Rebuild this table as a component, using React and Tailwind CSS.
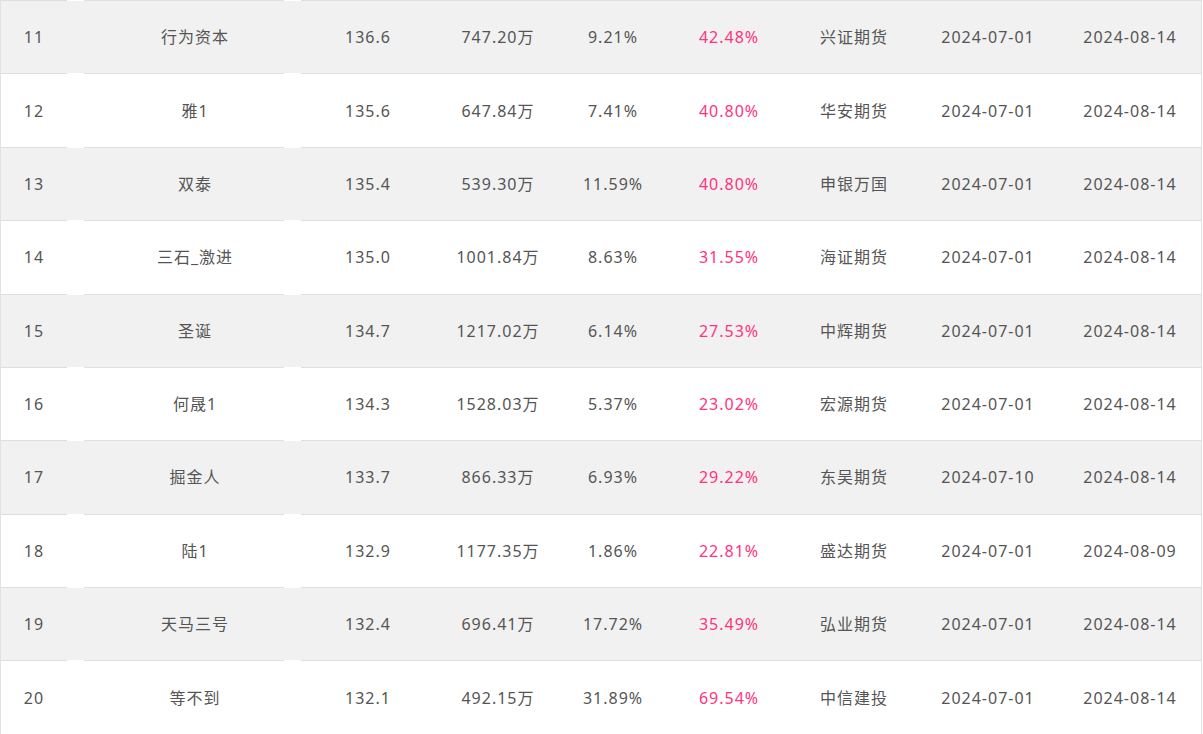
const rows = [
  ['11', '行为资本', '136.6', '747.20万', '9.21%', '42.48%', '兴证期货', '2024-07-01', '2024-08-14'],
  ['12', '雅1', '135.6', '647.84万', '7.41%', '40.80%', '华安期货', '2024-07-01', '2024-08-14'],
  ['13', '双泰', '135.4', '539.30万', '11.59%', '40.80%', '申银万国', '2024-07-01', '2024-08-14'],
  ['14', '三石_激进', '135.0', '1001.84万', '8.63%', '31.55%', '海证期货', '2024-07-01', '2024-08-14'],
  ['15', '圣诞', '134.7', '1217.02万', '6.14%', '27.53%', '中辉期货', '2024-07-01', '2024-08-14'],
  ['16', '何晟1', '134.3', '1528.03万', '5.37%', '23.02%', '宏源期货', '2024-07-01', '2024-08-14'],
  ['17', '掘金人', '133.7', '866.33万', '6.93%', '29.22%', '东吴期货', '2024-07-10', '2024-08-14'],
  ['18', '陆1', '132.9', '1177.35万', '1.86%', '22.81%', '盛达期货', '2024-07-01', '2024-08-09'],
  ['19', '天马三号', '132.4', '696.41万', '17.72%', '35.49%', '弘业期货', '2024-07-01', '2024-08-14'],
  ['20', '等不到', '132.1', '492.15万', '31.89%', '69.54%', '中信建投', '2024-07-01', '2024-08-14'],
];

const widths = ['w-[66px]', 'w-[256px]', 'w-[90px]', 'w-[170px]', 'w-[60px]', 'w-[172px]', 'w-[78px]', 'w-[190px]', 'w-[94px]'];

function RowLine() {
  return (
    <div className="flex h-px">
      <div className="w-[66px] bg-[#dedee2]" />
      <div className="w-[17px] bg-white" />
      <div className="w-[200px] bg-[#dedee4]" />
      <div className="w-[17px] bg-white" />
      <div className="flex-1 bg-[#dedee4]" />
    </div>
  );
}

export default function App() {
  return (
    <div
      className="w-[1202px] border-l border-r border-[#e2e2e6] text-[16px] tracking-[1px] text-[#555]"
      style={{ fontFamily: '"Noto Sans", "Noto Sans CJK SC", sans-serif' }}
    >
      <RowLine />
      {rows.map((r, i) => (
        <div key={r[0]}>
          <div className={`flex h-[72.375px] items-center ${i % 2 === 0 ? 'bg-[#f1f1f1]' : 'bg-white'}`}>
            {r.map((cell, j) => (
              <div
                key={j}
                className={`${widths[j]} flex shrink-0 justify-center whitespace-nowrap ${j === 5 ? 'text-[#ff337f]' : ''}`}
              >
                {cell}
              </div>
            ))}
          </div>
          {i < rows.length - 1 && <RowLine />}
        </div>
      ))}
    </div>
  );
}
